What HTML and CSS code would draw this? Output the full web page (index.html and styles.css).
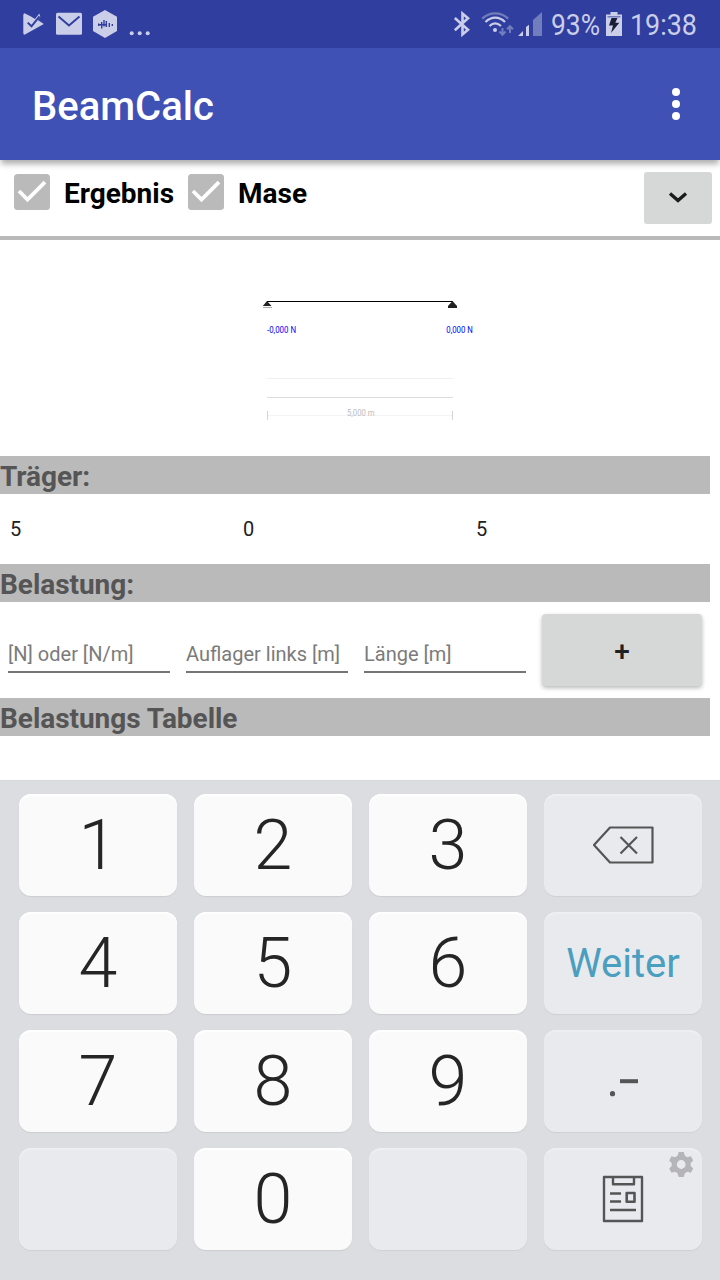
FILE: index.html
```html
<!DOCTYPE html>
<html lang="de">
<head>
<meta charset="utf-8">
<title>BeamCalc</title>
<link rel="stylesheet" href="styles.css">
</head>
<body>
<div class="screen">
  <header class="statusbar">
    <svg class="notifications" width="160" height="48" viewBox="0 0 160 48">
      <path class="ink" d="M24.5 13.3L31 16.5L35 19L39.3 13.4L40.3 17L37.8 20L43.8 24L24.5 34.7Q23.3 34.5 23.3 33V15Q23.5 13.5 24.5 13.3Z"/>
      <path class="cut" d="M27.7 22.6L31.5 26.3L39.5 16.3" stroke-width="2"/>
      <rect class="ink" x="56" y="12.8" width="26" height="22" rx="1.5"/>
      <path class="cut" d="M58.5 16.5L69 25.5L79.5 16.5" stroke-width="2"/>
      <path class="ink" d="M105 10L117 16.8V31L105 38L93 31V16.8Z"/>
      <path class="cut" d="M98.7 23.5V26M101.7 22V28.5M104 20V26.5M106.3 21V27M109.3 23V27M112.3 24V26M98.7 24.7H106" stroke-width="1.4"/>
      <circle class="ink" cx="131.7" cy="33.3" r="2"/><circle class="ink" cx="139.7" cy="33.3" r="2"/><circle class="ink" cx="147.7" cy="33.3" r="2"/>
    </svg>
    <svg class="system" width="280" height="48" viewBox="440 0 280 48">
      <path class="line" d="M454.8 18L468 29.8L462.5 34.5V13.5L468 18.2L454.8 30.2" stroke-width="2.6"/>
      <path class="line faint" d="M482.2 18.6C489.5 11.5 501 11.5 508.2 18.6" stroke-width="2.2"/>
      <path class="line" d="M485.5 22C491.5 16.2 499 16.2 505 22M489.5 26C493 22.7 497.3 22.7 501 26" stroke-width="2.2"/>
      <circle class="ink" cx="495" cy="30" r="2"/>
      <path class="line faint" d="M502.5 28V34.5M499.5 31.5L502.5 34.7L505.5 31.5M510 33V26.5M507 29.3L510 26.2L513 29.3" stroke-width="2"/>
      <path class="ink" d="M518 36L523 31V36ZM526 27L529 24.7V36H526Z"/>
      <path class="faintfill" d="M533 20L542 12V36H533Z"/>
      <text x="551" y="35" textLength="49" lengthAdjust="spacingAndGlyphs">93%</text>
      <path class="ink" d="M610.5 12H617.5V14.5H622V36H606V14.5H610.5Z"/>
      <path class="faintfill" d="M607.5 16H620.5V17.5H607.5Z"/>
      <path d="M611.5 18H617.5L615.3 22.8H619.3L611 33L613 25.5H609Z" fill="#1b1c38"/>
      <text x="630" y="35" textLength="67" lengthAdjust="spacingAndGlyphs">19:38</text>
    </svg>
  </header>
  <nav class="appbar">
    <h1 class="title">BeamCalc</h1>
    <svg class="more" width="8" height="32" viewBox="0 0 8 32"><circle cx="4" cy="4" r="4"/><circle cx="4" cy="16" r="4"/><circle cx="4" cy="28" r="4"/></svg>
  </nav>
  <div class="options">
    <label class="option"><svg width="36" height="36" viewBox="0 0 36 36"><rect width="36" height="36" rx="3.5" fill="#bababa"/><path d="M5 17L13.5 25.5L31 8.2" class="tick"/></svg><span class="option-label ergebnis">Ergebnis</span></label>
    <label class="option"><svg width="36" height="36" viewBox="0 0 36 36"><rect width="36" height="36" rx="3.5" fill="#bababa"/><path d="M5 17L13.5 25.5L31 8.2" class="tick"/></svg><span class="option-label">Mase</span></label>
    <button class="expand" aria-label="Ausklappen"><svg width="20" height="14" viewBox="0 0 20 14"><path d="M2 2.5L10 9.5L18 2.5"/></svg></button>
  </div>
  <svg class="beam" width="720" height="216" viewBox="0 240 720 216">
    <path d="M267 301.5H453" stroke="#000"/>
    <path d="M267 301L271.5 306H262.8Z" fill="#222"/>
    <path d="M263 307.5H272" stroke="#aaa"/>
    <path d="M452.5 301L457 306V308H448V306Z" fill="#222"/>
    <text x="267" y="332.6" fill="#00f" textLength="29" lengthAdjust="spacingAndGlyphs">-0,000 N</text>
    <text x="446.3" y="332.6" fill="#00f" textLength="26.5" lengthAdjust="spacingAndGlyphs">0,000 N</text>
    <path d="M267 378.5H453" stroke="#f0f0f0"/>
    <path d="M267 397.5H453" stroke="#dedede"/>
    <path d="M267 415.5H453" stroke="#f3f3f3"/>
    <path d="M267.5 411V420M452.5 411V420" stroke="#d4d4d4"/>
    <text x="347" y="416" fill="#bdbdbd" textLength="27.5" lengthAdjust="spacingAndGlyphs">5,000 m</text>
  </svg>
  <h2 class="section">Träger:</h2>
  <div class="values"><span>5</span><span>0</span><span>5</span></div>
  <h2 class="section">Belastung:</h2>
  <div class="load-form">
    <div class="field">[N] oder [N/m]</div>
    <div class="field">Auflager links [m]</div>
    <div class="field">Länge [m]</div>
    <button class="add">+</button>
  </div>
  <h2 class="section">Belastungs Tabelle</h2>
  <div class="keyboard">
    <button class="key">1</button><button class="key">2</button><button class="key">3</button>
    <button class="key alt" aria-label="Löschen"><svg width="158" height="102" viewBox="0 0 158 102" class="glyph"><path d="M50 51L66 33.5H108.5V68.5H66Z" stroke-width="2.2"/><path d="M76.5 43L93 59.5M93 43L76.5 59.5" stroke-width="2.2"/></svg></button>
    <button class="key">4</button><button class="key">5</button><button class="key">6</button>
    <button class="key alt next">Weiter</button>
    <button class="key">7</button><button class="key">8</button><button class="key">9</button>
    <button class="key alt" aria-label="Punkt, Minus"><svg width="158" height="102" viewBox="0 0 158 102"><circle cx="68.5" cy="63.7" r="2.6" fill="#555"/><path d="M76 51.2H94" stroke="#555" stroke-width="4"/></svg></button>
    <button class="key alt" aria-label="leer"></button><button class="key">0</button><button class="key alt" aria-label="leer"></button>
    <button class="key alt" aria-label="Zwischenablage"><svg width="158" height="102" viewBox="0 0 158 102" class="glyph">
      <path d="M60 29H98V73H60ZM69 29V36.3H90V29M66 45.5H77M66 53.5H77M66 62H92" stroke-width="2.4"/>
      <rect x="82.7" y="45" width="7.8" height="8.7" stroke-width="2.6"/>
      <g fill="#b5b5b7" stroke="none" transform="translate(137.2 16.5)">
        <path fill-rule="evenodd" d="M-2.5 -12.5H2.5L3.7 -8.7L6.2 -7.3L9.7 -8.2L12 -4L9.5 -1.6V1.6L12 4L9.7 8.2L6.2 7.3L3.7 8.7L2.5 12.5H-2.5L-3.7 8.7L-6.2 7.3L-9.7 8.2L-12 4L-9.5 1.6V-1.6L-12 -4L-9.7 -8.2L-6.2 -7.3L-3.7 -8.7ZM0 -4.4A4.4 4.4 0 1 0 0 4.4A4.4 4.4 0 1 0 0 -4.4Z"/>
      </g></svg></button>
  </div>
</div>
</body>
</html>
```

FILE: styles.css
```css
* { box-sizing: border-box; }
body { margin: 0; background: #fff; font-family: Roboto, sans-serif; }
button { border: 0; padding: 0; font-family: inherit; }
svg { display: block; flex: none; }
.screen { width: 720px; height: 1280px; display: flex; flex-direction: column; overflow: hidden; }

.statusbar { height: 48px; flex: none; display: flex; justify-content: space-between; background: #303f9f; }
.statusbar .ink { fill: #cbcee8; }
.statusbar .cut { fill: none; stroke: #303f9f; }
.statusbar .line { fill: none; stroke: #cbcee8; }
.statusbar .faint { stroke: #727dbe; }
.statusbar .faintfill { fill: #727dbe; }
.statusbar text { fill: #cbcee8; font-size: 30px; }

.appbar { height: 112px; flex: none; display: flex; align-items: center; justify-content: space-between; padding: 0 40px 0 32px; background: #3f51b5; box-shadow: 0 5px 6px -1px rgba(0, 0, 0, .32); }
.title { margin: 5px 0 0; color: #fff; font-size: 40px; line-height: 48px; font-weight: 500; }
.more { fill: #fff; }

.options { height: 80px; flex: none; display: flex; gap: 14px; padding: 12px 8px 0 14px; border-bottom: 4px solid #bababa; }
.option { display: flex; gap: 14px; padding-top: 2px; height: 42px; }
.option-label { font-size: 28px; line-height: 40px; font-weight: 700; }
.ergebnis { width: 110px; }
.tick { fill: none; stroke: #fff; stroke-width: 3.8; }
.expand { width: 68px; height: 52px; margin-left: auto; border-radius: 3px; background: #d6d7d7; display: flex; align-items: center; justify-content: center; }
.expand path { fill: none; stroke: #1c1c1c; stroke-width: 3.4; }

.beam { font-size: 8.4px; }

.section { width: 710px; height: 38px; flex: none; margin: 0; background: #bababa; color: #555; font-size: 28px; line-height: 42px; letter-spacing: -0.05px; font-weight: 700; }
.values { height: 70px; flex: none; display: grid; grid-template-columns: repeat(3, 233px); align-items: center; padding-left: 10px; font-size: 20px; color: #212121; }
.load-form { height: 96px; flex: none; display: grid; grid-template-columns: repeat(3, 162px) 160px; gap: 16px; padding: 12px 8px; }
.field { height: 59px; padding-top: 28px; border-bottom: 2px solid #757575; color: #7b7b7b; font-size: 20px; line-height: 24px; white-space: nowrap; }
.add { height: 72px; padding-top: 2px; border-radius: 4px; background: #d6d7d7; color: #212121; font-size: 28px; font-weight: 500; box-shadow: 0 2px 4px rgba(0, 0, 0, .28); }

.keyboard { height: 500px; flex: none; margin-top: 44px; padding: 13px 18px 30px 19px; display: grid; grid-template-columns: repeat(4, 158px); grid-template-rows: repeat(4, 102px); gap: 16px 17px; background: #dcdde1; border-top: 1px solid #d7d9d9; }
.key { border-radius: 12px; background: #fafafa; color: #252525; font-size: 70px; font-weight: 300; line-height: 102px; box-shadow: 0 1px 1px #cccdd0, inset 0 2px 1px #fff; }
.alt { background: #e9eaee; box-shadow: 0 1px 1px #cfd0d3, inset 0 2px 1px #eeeff2; }
.next { padding-top: 2px; line-height: 100px; color: #4a9fc0; font-size: 40px; font-weight: 400; }
.glyph { fill: none; stroke: #555; stroke-linejoin: round; }
```
